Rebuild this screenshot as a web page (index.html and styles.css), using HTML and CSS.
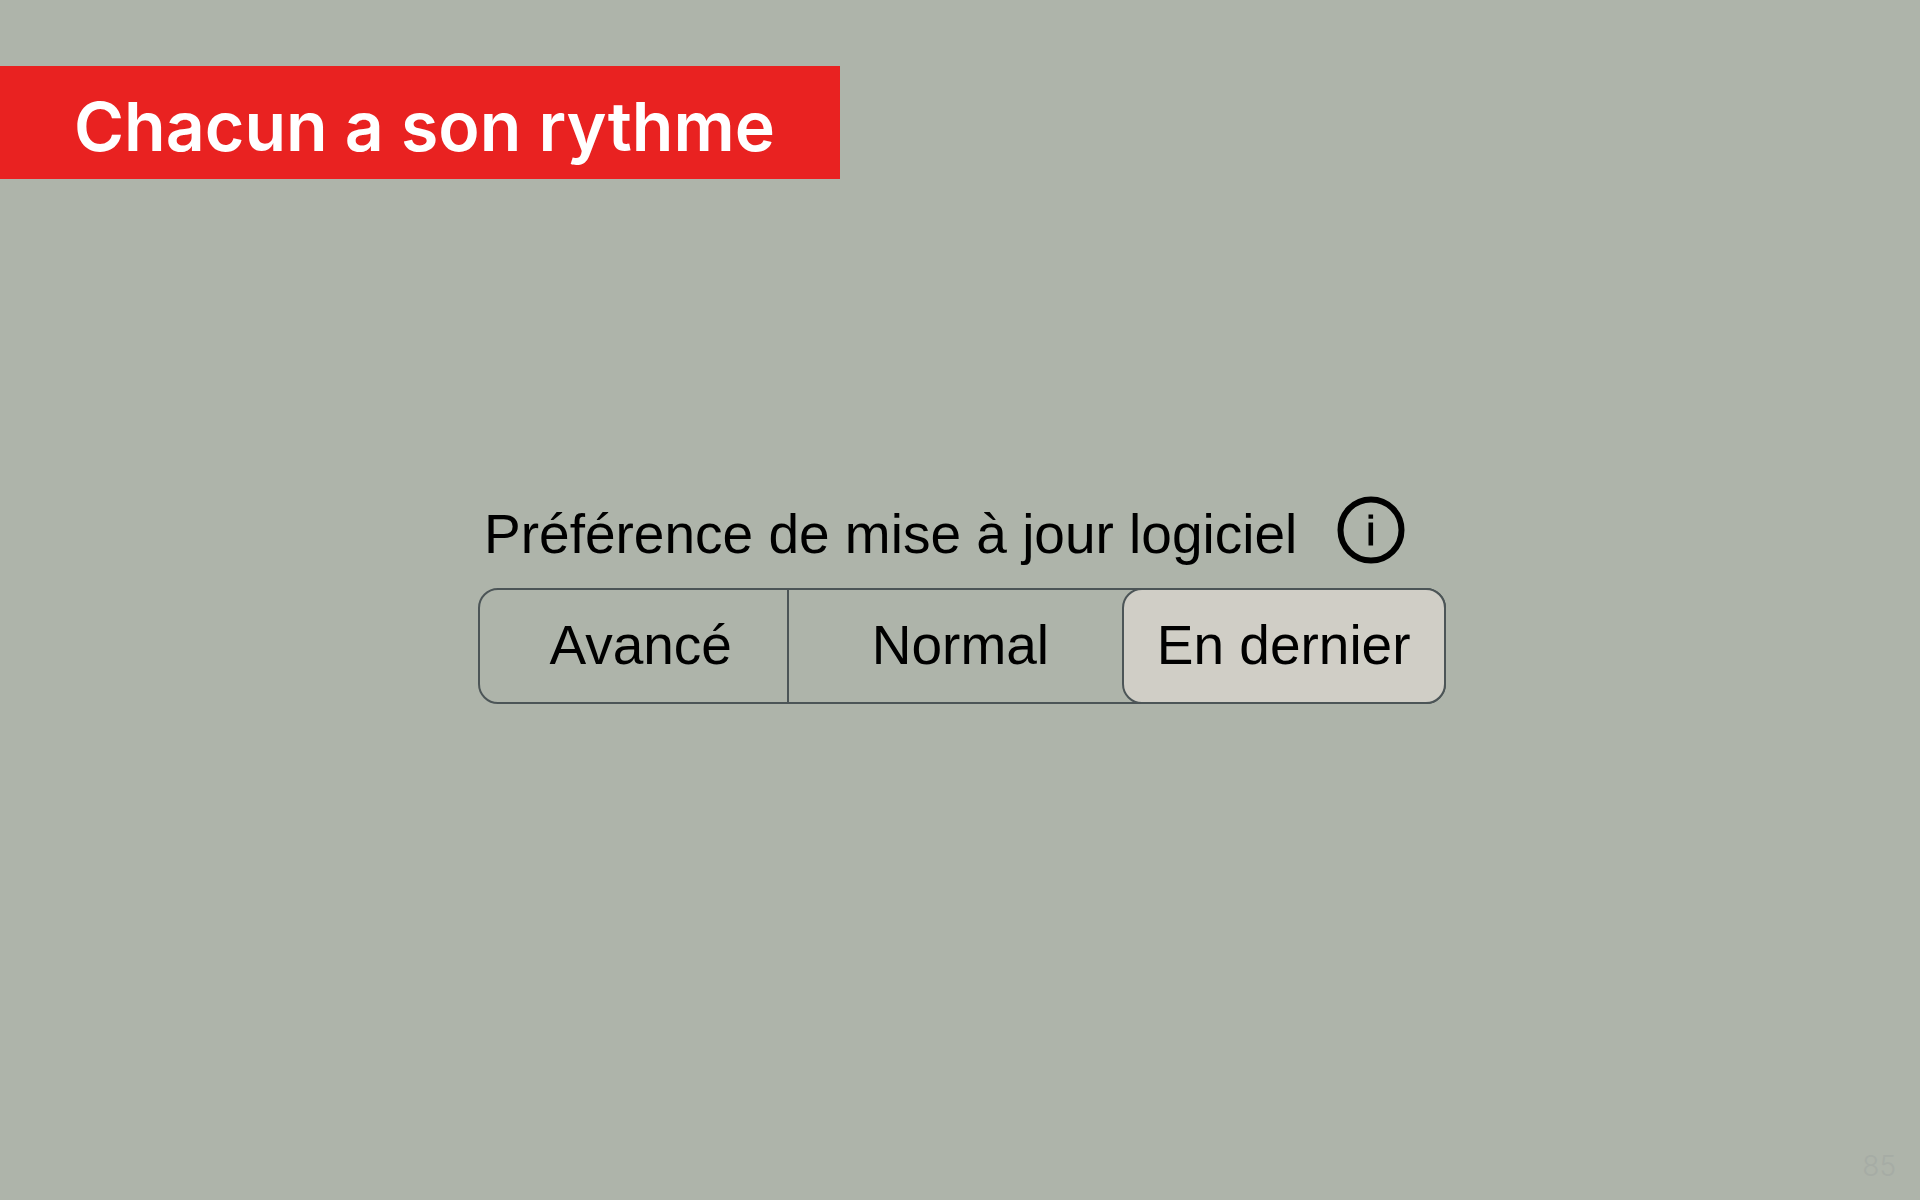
FILE: index.html
```html
<!DOCTYPE html>
<html lang="fr">
<head>
    <meta charset="UTF-8">
    <meta name="viewport" content="width=device-width, initial-scale=1.0">
    <title>Chacun a son rythme</title>
    <link rel="stylesheet" href="styles.css">
</head>
<body>
    <header>
        <h1 class="banner">Chacun a son rythme</h1>
    </header>

    <main class="preference">
        <div class="preference-title">
            <h2 id="preference-label">Préférence de mise à jour logiciel</h2>
            <button class="info" type="button" aria-label="Informations">
                <svg viewBox="0 0 68 68" aria-hidden="true">
                    <circle cx="34" cy="34" r="30.5" fill="none" stroke="currentColor" stroke-width="6"/>
                    <rect x="31.5" y="18.5" width="4.6" height="4.2" fill="currentColor"/>
                    <rect x="31.5" y="26.5" width="4.6" height="23" fill="currentColor"/>
                </svg>
            </button>
        </div>
        <div class="segmented" role="group" aria-labelledby="preference-label">
            <button class="segment early" type="button" aria-pressed="false">Avancé</button>
            <button class="segment normal" type="button" aria-pressed="false">Normal</button>
            <button class="segment selected" type="button" aria-pressed="true">En dernier</button>
        </div>
    </main>

    <footer class="page-number">85</footer>

    <script>
        const segments = document.querySelectorAll('.segment');

        segments.forEach(segment => {
            segment.addEventListener('click', () => {
                segments.forEach(other => {
                    other.classList.toggle('selected', other === segment);
                    other.setAttribute('aria-pressed', other === segment);
                });
            });
        });
    </script>
</body>
</html>
```

FILE: styles.css
```css
:root {
    --fond: #aeb4aa;
    --rouge: #e92221;
    --bordure: #4c5557;
    --selection: #d0cec6;
}

* {
    margin: 0;
    padding: 0;
    box-sizing: border-box;
}

body {
    background-color: var(--fond);
    color: #000;
    font-family: "Liberation Sans", Arial, sans-serif;
    display: grid;
    grid-template-rows: 1fr auto 1fr;
    min-height: 100vh;
}

header {
    padding-top: 66px;
}

.banner {
    width: fit-content;
    min-width: 43.75%;
    padding: 20px 64px 13px 74px;
    background-color: var(--rouge);
    color: #fff;
    font-family: Inter, "Liberation Sans", sans-serif;
    font-size: 68px;
    font-weight: 600;
    line-height: 80px;
}

.preference {
    width: 50.4%;
    min-width: min-content;
    margin-left: 24.9%;
}

.preference-title {
    display: flex;
    align-items: center;
    gap: 40px;
    padding-left: 6px;
    margin-bottom: 24px;
}

.preference-title h2 {
    padding-top: 8px;
    font-size: 55px;
    font-weight: 400;
    line-height: 60px;
    white-space: nowrap;
}

.info {
    width: 68px;
    height: 68px;
    border: none;
    background: none;
    color: inherit;
    cursor: pointer;
}

.info svg {
    display: block;
}

.segmented {
    display: grid;
    grid-template-columns: 309fr 334fr 320fr;
    border: 2px solid var(--bordure);
    border-radius: 20px;
}

.segment {
    height: 112px;
    padding-bottom: 2px;
    border: none;
    background: none;
    color: inherit;
    font-family: inherit;
    font-size: 55px;
    cursor: pointer;
}

.early {
    padding-left: 14px;
    border-right: 2px solid var(--bordure);
}

.normal {
    padding-left: 8px;
}

.segment.selected {
    margin: -2px;
    height: 116px;
    border: 2px solid var(--bordure);
    border-radius: 20px;
    background-color: var(--selection);
}

.page-number {
    align-self: end;
    justify-self: end;
    padding: 0 24px 18px 0;
    color: #a6aca5;
    font-family: Inter, "Liberation Sans", sans-serif;
    font-size: 28px;
    font-weight: 300;
    line-height: 32px;
}
```
